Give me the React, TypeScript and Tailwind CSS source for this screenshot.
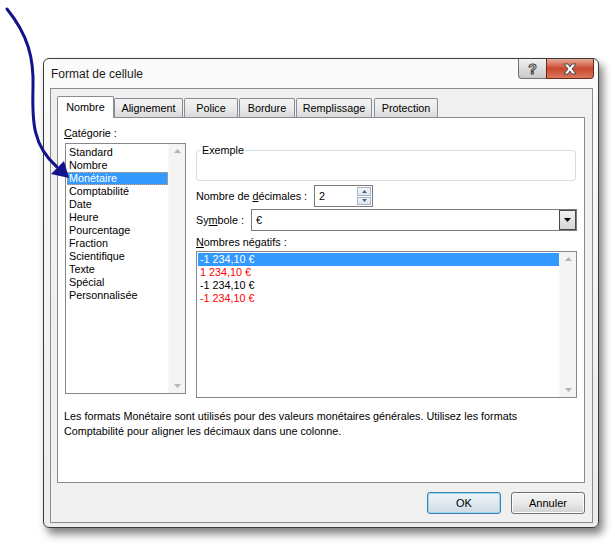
import { FC, ReactNode } from 'react'
import clsx from 'clsx'

const categories = [
  'Standard',
  'Nombre',
  'Monétaire',
  'Comptabilité',
  'Date',
  'Heure',
  'Pourcentage',
  'Fraction',
  'Scientifique',
  'Texte',
  'Spécial',
  'Personnalisée',
]

const negatives = [
  { label: '-1 234,10 €', red: false },
  { label: '1 234,10 €', red: true },
  { label: '-1 234,10 €', red: false },
  { label: '-1 234,10 €', red: true },
]

const tabs = [
  { label: 'Nombre', w: 'w-[57px]' },
  { label: 'Alignement', w: 'w-[69px]' },
  { label: 'Police', w: 'w-[54px] ml-[1px]' },
  { label: 'Bordure', w: 'w-[56px] ml-[1px]' },
  { label: 'Remplissage', w: 'w-[76px] ml-[1px]' },
  { label: 'Protection', w: 'w-[64px] ml-[2px]' },
]

const ScrollBar: FC = () => (
  <div className="w-[17px] shrink-0 bg-[#f4f4f4] border-l border-[#f9f9f9] flex flex-col justify-between items-center py-[5px]">
    <svg width="7" height="4" viewBox="0 0 7 4">
      <path d="M0 4 L3.5 0 L7 4 Z" fill="#b4b4b4" />
    </svg>
    <svg width="7" height="4" viewBox="0 0 7 4">
      <path d="M0 0 L3.5 4 L7 0 Z" fill="#b4b4b4" />
    </svg>
  </div>
)

const Button: FC<{ children: ReactNode; primary?: boolean }> = ({ children, primary }) => (
  <div
    className={clsx(
      'w-[74px] h-[22px] rounded-[3px] border flex items-center justify-center text-[11px] text-black',
      primary
        ? 'border-[#3c7fb1] bg-gradient-to-b from-[#eef5f9] via-[#dfe9ef] to-[#cddbe4] shadow-[inset_0_0_0_1px_#9fd5f3]'
        : 'border-[#707070] bg-gradient-to-b from-[#f4f4f4] via-[#e9e9e9] to-[#d2d2d2] shadow-[inset_0_0_0_1px_#fcfcfc]'
    )}
  >
    {children}
  </div>
)

export default function App() {
  return (
    <div
      className="relative w-[615px] h-[550px] bg-white overflow-hidden text-[10.8px] text-black"
      style={{ fontFamily: '"Liberation Sans", Arial, sans-serif' }}
    >
      <div className="ml-[43px] mt-[58px] w-[556px] h-[470px] rounded-[6px] border border-[#3b3b3b] bg-gradient-to-b from-[#fbfbfb] to-[#ececec] shadow-[4px_6px_9px_rgba(0,0,0,0.5)] flex flex-col pl-[6px] pr-[5px] pb-[4px]">
        {/* title bar */}
        <div className="h-[29px] flex justify-between items-start">
          <div className="pl-[1px] pt-[8px] text-[12px] leading-[15px] text-[#1a1a1a]">Format de cellule</div>
          <div className="flex mr-[-1px]">
            <div className="w-[28px] h-[20px] rounded-bl-[4px] border border-t-0 border-r-0 border-[#707070] bg-gradient-to-b from-[#f2f2f2] via-[#dcdcdc] to-[#c9c9c9] flex items-center justify-center">
              <span className="text-[14px] font-bold leading-none text-white [-webkit-text-stroke:1px_#444]">?</span>
            </div>
            <div className="w-[48px] h-[20px] rounded-br-[4px] border border-t-0 border-[#6b2a1e] bg-gradient-to-b from-[#e9a996] via-[#c9482e] to-[#d8765c] flex items-center justify-center">
              <svg width="16" height="12" viewBox="0 0 16 12">
                <path
                  d="M2 1 H6 L8 4 L10 1 H14 L10 6 L14 11 H10 L8 8 L6 11 H2 L6 6 Z"
                  fill="#ffffff"
                  stroke="#4a4a4a"
                  strokeWidth="1"
                  strokeLinejoin="round"
                />
              </svg>
            </div>
          </div>
        </div>

        {/* client area */}
        <div className="flex-1 border border-[#8c8c8c] bg-[#f0f0f0] flex flex-col pl-[6px] pr-[7px] pt-[7px]">
          {/* tabs */}
          <div className="flex items-end h-[21px]">
            {tabs.map((t, i) =>
              i === 0 ? (
                <div
                  key={t.label}
                  className={clsx(
                    t.w,
                    'relative z-10 h-[22px] -mb-px bg-white border border-b-0 border-[#898c95] rounded-t-[2px] flex items-center justify-center'
                  )}
                >
                  {t.label}
                </div>
              ) : (
                <div
                  key={t.label}
                  className={clsx(
                    t.w,
                    'h-[19px] border border-b-0 border-[#898c95] rounded-t-[2px] bg-gradient-to-b from-[#f3f3f3] via-[#ebebeb] to-[#d9d9d9] flex items-center justify-center pt-[1px]'
                  )}
                >
                  {t.label}
                </div>
              )
            )}
          </div>

          {/* tab panel */}
          <div className="w-[528px] h-[366px] border border-[#898c95] bg-white flex flex-col pl-[7px] pr-[6px] pt-[8px]">
            <div className="h-[14px] leading-[14px] -ml-[1px]">
              <u>C</u>atégorie :
            </div>
            <div className="flex gap-[10px] mt-[3px]">
              {/* category list */}
              <div className="w-[121px] h-[251px] border border-[#828790] bg-white flex">
                <div className="flex-1 pt-[2px] pl-[1px]">
                  {categories.map((c) => (
                    <div
                      key={c}
                      className={clsx(
                        'h-[13px] leading-[13px] pl-[2px]',
                        c === 'Monétaire' &&
                          'bg-[#3399ff] text-white outline outline-1 outline-dotted outline-[#f0a060] -outline-offset-1'
                      )}
                    >
                      {c}
                    </div>
                  ))}
                </div>
                <ScrollBar />
              </div>

              {/* right column */}
              <div className="w-[381px] flex flex-col">
                <div className="relative mt-[7px] h-[31px] w-[380px] rounded-[3px] border border-[#d5dfe5]">
                  <span className="absolute -top-[8px] left-[4px] bg-white px-[1px] leading-[14px]">Exemple</span>
                </div>

                <div className="flex items-center mt-[4px] h-[22px]">
                  <div className="w-[118px]">
                    Nombre de <u>d</u>écimales :
                  </div>
                  <div className="w-[59px] h-[22px] border border-[#7a7a7a] bg-white flex items-center">
                    <span className="flex-1 pl-[4px]">2</span>
                    <div className="w-[16px] h-full flex flex-col gap-px p-px">
                      <div className="flex-1 border border-[#a5b6c8] bg-gradient-to-b from-[#f4f7fa] to-[#dde5ee] flex items-center justify-center">
                        <svg width="5" height="3" viewBox="0 0 5 3">
                          <path d="M0 3 L2.5 0 L5 3 Z" fill="#4c607f" />
                        </svg>
                      </div>
                      <div className="flex-1 border border-[#a5b6c8] bg-gradient-to-b from-[#f4f7fa] to-[#dde5ee] flex items-center justify-center">
                        <svg width="5" height="3" viewBox="0 0 5 3">
                          <path d="M0 0 L2.5 3 L5 0 Z" fill="#4c607f" />
                        </svg>
                      </div>
                    </div>
                  </div>
                </div>

                <div className="flex items-center mt-[2px] h-[22px]">
                  <div className="w-[55px]">
                    Sy<u>m</u>bole :
                  </div>
                  <div className="w-[326px] h-[22px] border border-[#7a7a7a] bg-white flex items-center">
                    <span className="flex-1 pl-[4px]">€</span>
                    <div className="w-[17px] h-[20px] border border-[#4a4a4a] bg-gradient-to-b from-[#f2f2f2] to-[#d6d6d6] flex items-center justify-center">
                      <svg width="7" height="4" viewBox="0 0 7 4">
                        <path d="M0 0 L3.5 4 L7 0 Z" fill="#000" />
                      </svg>
                    </div>
                  </div>
                </div>

                <div className="mt-[4px] h-[14px] leading-[14px]">
                  <u>N</u>ombres négatifs :
                </div>

                <div className="mt-[2px] w-[381px] h-[147px] border border-[#828790] bg-white flex">
                  <div className="flex-1 pt-[1px] pl-[1px]">
                    {negatives.map((n, i) => (
                      <div
                        key={i}
                        className={clsx(
                          'h-[13px] leading-[13px] pl-[2px]',
                          i === 0 && 'bg-[#3399ff] text-white',
                          i !== 0 && n.red && 'text-[#ff0000]'
                        )}
                      >
                        {n.label}
                      </div>
                    ))}
                  </div>
                  <ScrollBar />
                </div>
              </div>
            </div>

            <div className="mt-[11px] leading-[15px] -ml-[1px]">
              Les formats Monétaire sont utilisés pour des valeurs monétaires générales. Utilisez les formats
              <br />
              Comptabilité pour aligner les décimaux dans une colonne.
            </div>
          </div>

          {/* buttons */}
          <div className="flex justify-end gap-[10px] mt-[9px] w-[528px]">
            <Button primary>OK</Button>
            <Button>Annuler</Button>
          </div>
        </div>
      </div>

      {/* pointer arrow */}
      <svg className="absolute left-0 top-0" width="90" height="190" viewBox="0 0 90 190">
        <path
          d="M7 9 C28 35, 34 58, 33 88 C32 122, 33 146, 57 167"
          fill="none"
          stroke="#14148a"
          strokeWidth="3"
          strokeLinecap="round"
        />
        <path d="M69 178 L51 174 L64 161 Z" fill="#14148a" />
      </svg>
    </div>
  )
}
